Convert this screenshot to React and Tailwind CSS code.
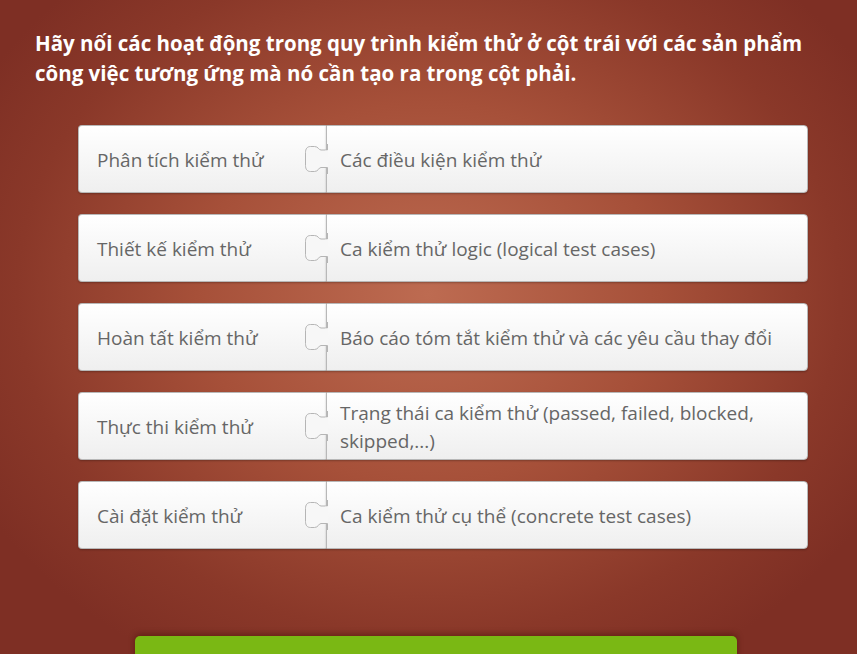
import React from 'react';

const pairs = [
  ['Phân tích kiểm thử', 'Các điều kiện kiểm thử'],
  ['Thiết kế kiểm thử', 'Ca kiểm thử logic (logical test cases)'],
  ['Hoàn tất kiểm thử', 'Báo cáo tóm tắt kiểm thử và các yêu cầu thay đổi'],
  ['Thực thi kiểm thử', 'Trạng thái ca kiểm thử (passed, failed, blocked, skipped,...)'],
  ['Cài đặt kiểm thử', 'Ca kiểm thử cụ thể (concrete test cases)'],
];

// puzzle tab sticking out of the right card into the left one
const Knob = () => (
  <svg
    className="absolute left-[-23px] top-1/2 -translate-y-1/2"
    width="24"
    height="30"
    viewBox="0 0 24 30"
  >
    <path
      d="M23.5 0 L23.5 6 L17 6 C14.5 6 14.5 2.5 10.5 2.5 L6.5 2.5 C3 2.5 1.5 5 1.5 8.5 L1.5 21.5 C1.5 25 3 27.5 6.5 27.5 L10.5 27.5 C14.5 27.5 14.5 23.5 17 23.5 L23.5 23.5 L23.5 30"
      fill="#f7f7f7"
      stroke="#b5b5b5"
      strokeWidth="1"
    />
    <rect x="21" y="6.6" width="4" height="16.4" fill="#f7f7f7" />
  </svg>
);

const Row = ({ left, right }) => (
  <div className="flex h-[68px]">
    <div className="flex w-[248px] items-center rounded-l-[4px] border border-r-0 border-[#b8b8b8] bg-gradient-to-b from-white to-[#efefef] pl-[18px] pt-[2px] text-[19px] text-[#666] shadow-[0_1px_2px_rgba(0,0,0,0.25)]">
      {left}
    </div>
    <div className="relative flex flex-1 items-center rounded-r-[4px] border border-[#b8b8b8] bg-gradient-to-b from-white to-[#efefef] pl-[13px] pr-[18px] pt-[2px] text-[19px] leading-[28px] text-[#666] shadow-[0_1px_2px_rgba(0,0,0,0.25)]">
      <Knob />
      <span>{right}</span>
    </div>
  </div>
);

export default function App() {
  return (
    <div
      className="relative h-[654px] w-[857px] overflow-hidden bg-[radial-gradient(ellipse_60%_65%_at_50%_45%,#bd6b51_0%,#a65039_45%,#8a3829_80%,#7e2f24_100%)]"
      style={{ fontFamily: '"Open Sans", "Noto Sans", sans-serif' }}
    >
      <h1 className="pl-[35px] pr-[30px] pt-[28px] text-[20.5px] font-bold leading-[30px] text-white">
        Hãy nối các hoạt động trong quy trình kiểm thử ở cột trái với các sản phẩm công việc tương ứng mà nó cần tạo ra trong cột phải.
      </h1>

      <div className="ml-[78px] mt-[37px] flex w-[730px] flex-col gap-[21px]">
        {pairs.map(([l, r]) => (
          <Row key={l} left={l} right={r} />
        ))}
      </div>

      <div className="ml-[135px] mt-[87px] h-[60px] w-[602px] rounded-t-[5px] bg-[#7ab814] shadow-[0_-2px_6px_rgba(60,10,0,0.45)]" />
    </div>
  );
}
